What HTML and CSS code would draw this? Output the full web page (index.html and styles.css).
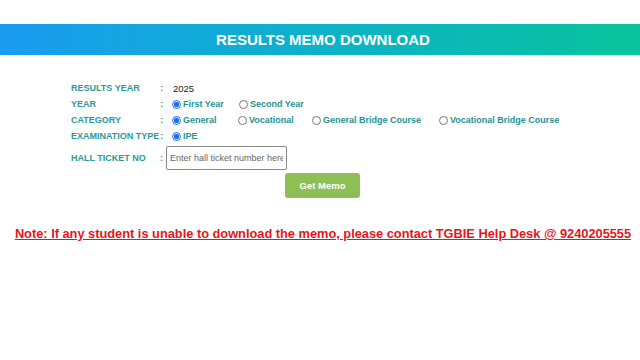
FILE: index.html
```html
<!DOCTYPE html>
<html>
<head>
<meta charset="utf-8">
<link rel="stylesheet" href="styles.css">
</head>
<body>
<div class="header">RESULTS MEMO DOWNLOAD</div>
<div class="form">
  <div class="row">
    <span class="label">RESULTS YEAR</span><span class="colon">:</span>
    <span class="value">2025</span>
  </div>
  <div class="row">
    <span class="label">YEAR</span><span class="colon">:</span>
    <label class="opt w-first"><input type="radio" name="y" checked>First Year</label>
    <label class="opt"><input type="radio" name="y">Second Year</label>
  </div>
  <div class="row">
    <span class="label">CATEGORY</span><span class="colon">:</span>
    <label class="opt w-gen"><input type="radio" name="c" checked>General</label>
    <label class="opt w-voc"><input type="radio" name="c">Vocational</label>
    <label class="opt w-gbc"><input type="radio" name="c">General Bridge Course</label>
    <label class="opt"><input type="radio" name="c">Vocational Bridge Course</label>
  </div>
  <div class="row">
    <span class="label">EXAMINATION TYPE</span><span class="colon">:</span>
    <label class="opt"><input type="radio" name="e" checked>IPE</label>
  </div>
  <div class="row ticket">
    <span class="label">HALL TICKET NO</span><span class="colon">:</span>
    <input class="ticket-input" type="text" placeholder="Enter hall ticket number here">
  </div>
  <div class="btn-row"><button class="btn">Get Memo</button></div>
</div>
<p class="note">Note: If any student is unable to download the memo, please contact TGBIE Help Desk @ 9240205555</p>
</body>
</html>
```
FILE: styles.css
```css
body {
  margin: 0;
  background: #fff;
  font-family: "Liberation Sans", Arial, sans-serif;
}
.header {
  margin-top: 24px;
  height: 31px;
  line-height: 31px;
  padding-left: 6px;
  background: linear-gradient(90deg, #1a9cf2 0%, #0cb2c8 50%, #08c49c 100%);
  color: #fff;
  font-weight: bold;
  font-size: 15px;
  text-align: center;
}
.form {
  padding-left: 71px;
  padding-top: 25px;
}
.row {
  display: flex;
  align-items: center;
  height: 16px;
  font-size: 9px;
  font-weight: bold;
  color: #2a9a9a;
  white-space: nowrap;
}
.label {
  width: 89px;
}
.colon {
  width: 12px;
}
.value {
  color: #222;
  font-weight: normal;
  font-size: 9.5px;
  margin-left: 1px;
}
.opt {
  display: flex;
  align-items: center;
  color: #229494;
}
.opt input {
  width: 9px;
  height: 9px;
  margin: 0 2px 0 0;
  accent-color: #1a73e8;
}
.w-first { width: 67px; }
.w-gen { width: 66px; }
.w-voc { width: 74px; }
.w-gbc { width: 127px; }
.ticket {
  height: 24px;
  margin-top: 2px;
}
.ticket-input {
  width: 121px;
  height: 24px;
  box-sizing: border-box;
  border: 1px solid #888;
  border-radius: 2px;
  padding: 0 3px;
  font-family: "Liberation Sans", Arial, sans-serif;
  font-size: 9px;
  margin-left: -6px;
}
.ticket-input::placeholder { color: #666; }
.btn-row {
  padding-left: 214px;
  margin-top: 3px;
}
.btn {
  width: 75px;
  height: 25px;
  border: none;
  border-radius: 3px;
  background: #8dbf55;
  color: #fff;
  font-family: "Liberation Sans", Arial, sans-serif;
  font-weight: bold;
  font-size: 9.5px;
}
.note {
  margin: 28px 0 0;
  padding-left: 6px;
  text-align: center;
  color: #e8141c;
  font-weight: bold;
  font-size: 12.8px;
  text-decoration: underline;
}
```
